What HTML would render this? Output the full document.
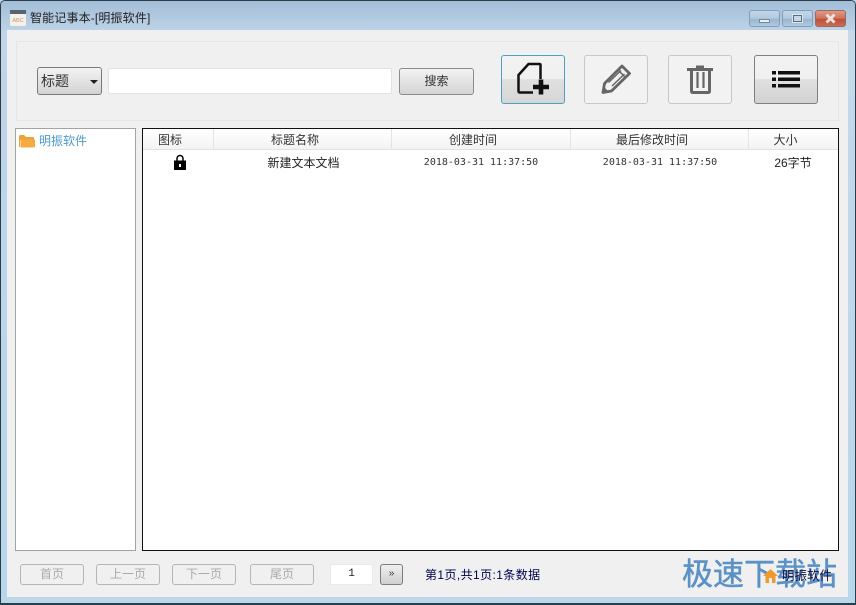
<!DOCTYPE html>
<html lang="zh"><head><meta charset="utf-8"><style>
html,body{margin:0;padding:0}
body{width:856px;height:605px;overflow:hidden;position:relative;background:#bcd6ea;font:12px/14px "Liberation Sans","Noto Sans CJK SC",sans-serif;color:#222}
div,svg,span{position:absolute;box-sizing:border-box}
.c{text-align:center}
.hd{top:133px;line-height:14px;color:#333;text-align:center}
.sep{top:129px;width:1px;height:21px;background:#e4e4e4}
.dt{top:156px;font:10px/14px "DejaVu Sans Mono","Liberation Mono",monospace;color:#333;white-space:pre;text-align:center}
.tb{top:55px;height:49px;width:64px;border-radius:3px}
.pg{top:564px;width:64px;height:21px;border:1px solid #b5b5b5;border-radius:3px;background:#f0f0f0;color:#aaa;text-align:center;line-height:19px}
</style></head><body>
<div style="left:0;top:0;width:856px;height:605px;background:#bcd6ea;border:1px solid #2c3c48;border-radius:5px 5px 0 0"></div>
<div style="left:1px;top:1px;width:854px;height:29px;border-radius:4px 4px 0 0;background:linear-gradient(#a3bed8,#bcd2e6)"></div>
<div style="left:1px;top:30px;width:6px;height:573px;background:linear-gradient(#bfd5e8,#b8d6ec)"></div>
<div style="left:848px;top:30px;width:7px;height:573px;background:linear-gradient(#c5d9ea,#b8d6ec)"></div>
<div style="left:0;top:603px;width:856px;height:2px;background:#25404f"></div>
<div style="left:7px;top:30px;width:841px;height:567px;background:#f0f0f0"></div>

<svg style="left:10px;top:10px" width="16" height="16" viewBox="0 0 16 16"><rect x="0" y="0" width="16" height="16" rx="1.5" fill="#f4f1ea"/><rect x="0" y="0" width="16" height="4" fill="#5a6270"/><text x="8" y="12" font-size="5.5" font-family="Liberation Sans" text-anchor="middle" fill="#c99070">ABC</text></svg>
<div style="left:30px;top:11px;color:#222;white-space:nowrap;font-size:12px;letter-spacing:.15px">智能记事本-[明振软件]</div>

<div style="left:749px;top:10px;width:31px;height:17px;border:1px solid #829db8;border-radius:3px;background:linear-gradient(#c4d7e9 0,#b0c8de 50%,#9ab5cf 55%,#afcbe2)"></div>
<div style="left:759px;top:19px;width:11px;height:4px;background:#e9eff5;border:1px solid #7a8794"></div>
<div style="left:782px;top:10px;width:31px;height:17px;border:1px solid #829db8;border-radius:3px;background:linear-gradient(#c4d7e9 0,#b0c8de 50%,#9ab5cf 55%,#afcbe2)"></div>
<div style="left:793px;top:15px;width:9px;height:7px;background:#c9d8e6;border:1px solid #5d6c7c;outline:1px solid #dde6ef"></div>
<div style="left:815px;top:10px;width:31px;height:17px;border:1px solid #9a6a60;border-radius:3px;background:linear-gradient(#dd9a85 0,#cf7058 50%,#bd4f38 55%,#cc6a52)"></div>
<svg style="left:822px;top:12px" width="17" height="13" viewBox="0 0 17 13"><path d="M4.500 2.500L12.500 10.500M12.500 2.500L4.500 10.500" stroke="#efe2dc" stroke-width="3" fill="none"/></svg>

<div style="left:16px;top:41px;width:823px;height:80px;background:#f0f0f0;border:1px solid #e6e6e6"></div>

<div style="left:37px;top:67px;width:65px;height:28px;border:1px solid #7a7a7a;border-radius:3px;background:linear-gradient(#f3f3f3,#d2d2d2);padding:6px 0 0 3px;color:#333;font-size:14px">标题</div>
<div style="left:90px;top:80px;width:0;height:0;border:4px solid transparent;border-top:4px solid #222;border-bottom:0"></div>
<div style="left:108px;top:68px;width:284px;height:26px;background:#fff;border:1px solid #e2e2e2;border-radius:2px"></div>
<div class="c" style="left:399px;top:68px;width:75px;height:27px;border:1px solid #8c8c8c;border-radius:3px;background:linear-gradient(#f3f3f3,#d4d4d4);line-height:25px;color:#333">搜索</div>

<div class="tb" style="left:501px;border:1px solid #4f9fc4;background:linear-gradient(#f2f2f2 0,#f0f0f0 48%,#e0e0e0 50%,#d6d6d6 100%)"></div>
<svg style="left:515px;top:60px" width="38" height="38" viewBox="0 0 38 38"><path d="M18 32.500H5Q3.500 32.500 3.500 31V15L13.500 4H24.500Q25.500 4 25.500 5V19" fill="none" stroke="#111" stroke-width="2.500"/><path d="M26 19.500V34.500M18 27H34" stroke="#111" stroke-width="4.600" fill="none"/></svg>

<div class="tb" style="left:584px;border:1px solid #c8c8c8;background:#f2f2f2"></div>
<svg style="left:600px;top:63px" width="32" height="32" viewBox="0 0 32 32"><path d="M22 3L29.500 10.500L11.500 28L3 29.500L4.500 20.500Z" fill="none" stroke="#666" stroke-width="2.800" stroke-linejoin="round"/><path d="M18 7L25.500 14.500M8.500 19.500L21 7.500M12 23L24.500 11" stroke="#666" stroke-width="1.500" fill="none"/><path d="M3 29.500L4 24L9 29Z" fill="#666"/></svg>

<div class="tb" style="left:668px;border:1px solid #c8c8c8;background:#f2f2f2"></div>
<svg style="left:686px;top:63px" width="28" height="32" viewBox="0 0 28 32"><path d="M1 6.500H27" stroke="#666" stroke-width="3"/><path d="M10 4H18" stroke="#666" stroke-width="3" fill="none"/><path d="M5.500 7V28Q5.500 29.500 7 29.500H22Q23.500 29.500 23.500 28V7" fill="none" stroke="#666" stroke-width="3"/><path d="M11.500 9V25M17.500 9V25" stroke="#666" stroke-width="2.200"/></svg>

<div class="tb" style="left:754px;border:1px solid #7f7f7f;background:linear-gradient(#f2f2f2 0,#f0f0f0 48%,#e0e0e0 50%,#d2d2d2 100%)"></div>
<svg style="left:771px;top:70px" width="30" height="18" viewBox="0 0 30 18"><path d="M1 1h4v3.500H1zM1 7.500h4v3.500H1zM1 14h4v3.500H1zM7 1h22v3.500H7zM7 7.500h22v3.500H7zM7 14h22v3.500H7z" fill="#111"/></svg>

<div style="left:15px;top:128px;width:121px;height:423px;background:#fff;border:1px solid #a3a3a3"></div>
<svg style="left:19px;top:134px" width="16" height="14" viewBox="0 0 16 14"><path d="M0 2.500Q0 1 1.500 1H5L7 3H14Q15 3 15 4V6H1L1 13H0Z" fill="#eca23a"/><path d="M1.500 5.500H16V12Q16 13.500 14.500 13.500H1.500Z" fill="#f7aa40"/></svg>
<div style="left:39px;top:134px;color:#4a9bd0;white-space:nowrap;font-size:12px">明振软件</div>

<div style="left:142px;top:128px;width:697px;height:423px;background:#fff;border:1px solid #111"></div>
<div style="left:143px;top:129px;width:695px;height:21px;background:linear-gradient(#fff,#f3f3f3);border-bottom:1px solid #e2e2e2"></div>
<div class="sep" style="left:213px"></div><div class="sep" style="left:391px"></div><div class="sep" style="left:570px"></div><div class="sep" style="left:748px"></div>
<div class="hd" style="left:143px;width:54px">图标</div>
<div class="hd" style="left:214px;width:162px">标题名称</div>
<div class="hd" style="left:392px;width:162px">创建时间</div>
<div class="hd" style="left:571px;width:162px">最后修改时间</div>
<div class="hd" style="left:749px;width:73px">大小</div>

<svg style="left:173px;top:154px" width="14" height="16" viewBox="0 0 14 16"><path d="M4 7V4.500a3 3 0 0 1 6 0V7" fill="none" stroke="#000" stroke-width="1.500"/><rect x="1" y="6.500" width="12" height="9.500" fill="#000"/><rect x="6" y="10" width="2" height="3" fill="#fff"/></svg>
<div class="hd" style="left:214px;width:179px;top:156px;color:#222">新建文本文档</div>
<div class="dt" style="left:392px;width:178px">2018-03-31 11:37:50</div>
<div class="dt" style="left:571px;width:178px">2018-03-31 11:37:50</div>
<div class="hd" style="left:749px;width:88px;top:156px;color:#222">26字节</div>

<div class="pg" style="left:20px">首页</div>
<div class="pg" style="left:96px">上一页</div>
<div class="pg" style="left:172px">下一页</div>
<div class="pg" style="left:250px">尾页</div>
<div class="c" style="left:330px;top:564px;width:43px;height:21px;background:#fff;border:1px solid #eaeaea;font:11px/19px 'Liberation Mono',monospace;color:#222">1</div>
<div class="c" style="left:380px;top:564px;width:23px;height:21px;border:1px solid #7d7d7d;border-radius:3px;background:linear-gradient(#f0f0f0,#cfcfcf);font-size:10px;line-height:17px;color:#334">»</div>
<div style="left:425px;top:568px;color:#000050;white-space:nowrap;font-size:12px;letter-spacing:.4px">第1页,共1页:1条数据</div>

<div style="left:682px;top:556px;width:160px;height:38px;white-space:nowrap;font:400 31px/38px 'Liberation Sans','Noto Sans CJK SC',sans-serif;-webkit-text-stroke:.5px #5b91c6;color:#5b91c6">极速下载站</div>
<svg style="left:763px;top:569px" width="15" height="14" viewBox="0 0 15 14"><path d="M0 7L7.500 0L15 7H12.500V14H9V9H6V14H2.500V7Z" fill="#ef9a2e"/></svg>
<div style="left:782px;top:569px;color:#101040;white-space:nowrap;font-size:12.500px">明振软件</div>
</body></html>
